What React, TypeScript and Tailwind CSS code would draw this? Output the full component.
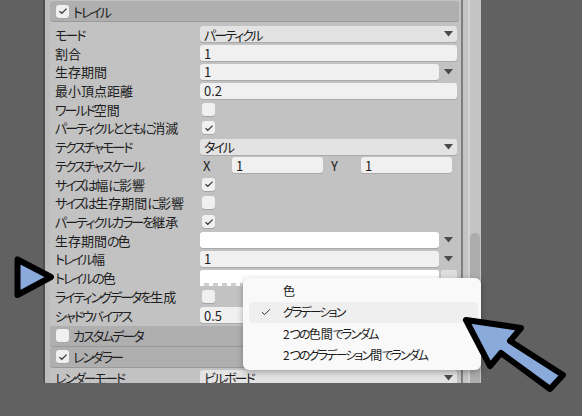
import React from "react";

const FONT = "font-['Noto_Sans_CJK_JP','Noto_Sans',sans-serif] [font-feature-settings:'palt']";

// kana in the reference font are narrower than Noto's, so tighten only the kana runs
function Jp({ text, tight = "label" }: { text: string; tight?: "label" | "menu" }) {
  const parts = text.split(/([\u3040-\u30ff]+)/).filter(Boolean);
  return (
    <>
      {parts.map((p, i) =>
        /[\u3040-\u30ff]/.test(p) ? (
          <span key={i} className={tight === "menu" ? "tracking-[-1.9px]" : "tracking-[-2px]"}>
            {p}
          </span>
        ) : (
          <span key={i}>{p}</span>
        )
      )}
    </>
  );
}

function Check({ on }: { on?: boolean }) {
  return (
    <div className="flex h-[13px] w-[13px] shrink-0 items-center justify-center rounded-[3px] bg-[#f0f0f0] shadow-[0_1px_0_#a4a4a4]">
      {on && (
        <svg width="10" height="8" viewBox="0 0 10 8">
          <path d="M1.5 4.2 L3.8 6.3 L8.6 1.6" fill="none" stroke="#3a3a3a" strokeWidth="1.2" />
        </svg>
      )}
    </div>
  );
}

function Arrow() {
  return (
    <div className="flex w-[18px] shrink-0 items-center justify-center">
      <svg width="9" height="6" viewBox="0 0 9 6">
        <path d="M0 0 H9 L4.5 5.5 Z" fill="#4a4a4a" />
      </svg>
    </div>
  );
}

function Field({ value, className = "" }: { value?: string; className?: string }) {
  return (
    <div
      className={`flex h-[16px] flex-1 items-center rounded-[3px] bg-[#f0f0f0] pl-[4px] text-[13px] leading-none text-[#1e1e1e] shadow-[0_1px_0_#a9a9a9] ${className}`}
    >
      {value}
    </div>
  );
}

function Drop({ value }: { value: string }) {
  return (
    <div className="flex h-[16px] flex-1 items-center justify-between rounded-[3px] bg-[#e3e3e3] pl-[4px] pr-[4px] text-[13px] leading-none text-[#1e1e1e] shadow-[0_1px_0_#a9a9a9]">
      <span>
        <Jp text={value} />
      </span>
      <svg width="9" height="6" viewBox="0 0 9 6">
        <path d="M0 0 H9 L4.5 5.5 Z" fill="#4a4a4a" />
      </svg>
    </div>
  );
}

function Row({ label, children }: { label: string; children?: React.ReactNode }) {
  return (
    <div className="flex h-[18.73px] items-center pl-[5px] pr-[4px]">
      <div className="w-[145px] shrink-0 whitespace-nowrap text-[13px] leading-none text-[#1e1e1e]">
        <Jp text={label} />
      </div>
      <div className="flex flex-1 items-center">{children}</div>
    </div>
  );
}

function Header({ label, on }: { label: string; on?: boolean }) {
  return (
    <div className="mr-[2px] flex h-[20px] items-center gap-[4px] rounded-[3px] bg-[#afafaf] pl-[6px] shadow-[0_1px_0_#999999]">
      <Check on={on} />
      <span className="text-[13px] leading-none text-[#1e1e1e]">
        <Jp text={label} />
      </span>
    </div>
  );
}

const menu = [
  { label: "色" },
  { label: "グラデーション", sel: true },
  { label: "2つの色間でランダム" },
  { label: "2つのグラデーション間でランダム" },
];

export default function App() {
  return (
    <div className={`relative h-[416px] w-[582px] overflow-hidden bg-[#616161] ${FONT}`}>
      <div className="flex">
        <div className="w-[43px] shrink-0" />
        <div className="flex h-[383px] w-[438px] shrink-0 overflow-hidden border-l-2 border-[#4f4f4f] bg-[#c2c2c2]">
          <div className="w-[5px] shrink-0 bg-[#bdbdbd]" />
          <div className="flex w-[411px] shrink-0 flex-col">
            <div className="mr-[2px] h-[3px] rounded-b-[3px] bg-[#a9a9a9]" />
            <div className="mt-[1px]">
              <Header label="トレイル" on />
            </div>
            <div className="mt-[4px] flex flex-col">
              <Row label="モード"><Drop value="パーティクル" /></Row>
              <Row label="割合"><Field value="1" /></Row>
              <Row label="生存期間"><Field value="1" /><Arrow /></Row>
              <Row label="最小頂点距離"><Field value="0.2" /></Row>
              <Row label="ワールド空間"><div className="pl-[2px]"><Check /></div></Row>
              <Row label="パーティクルとともに消滅"><div className="pl-[2px]"><Check on /></div></Row>
              <Row label="テクスチャモード"><Drop value="タイル" /></Row>
              <Row label="テクスチャスケール">
                <span className="w-[32px] pl-[3px] text-[13px] leading-none text-[#1e1e1e]">X</span>
                <Field value="1" className="max-w-[91px]" />
                <span className="w-[38px] pl-[8px] text-[13px] leading-none text-[#1e1e1e]">Y</span>
                <Field value="1" className="mr-[5px] max-w-[91px]" />
              </Row>
              <Row label="サイズは幅に影響"><div className="pl-[2px]"><Check on /></div></Row>
              <Row label="サイズは生存期間に影響"><div className="pl-[2px]"><Check /></div></Row>
              <Row label="パーティクルカラーを継承"><div className="pl-[2px]"><Check on /></div></Row>
              <Row label="生存期間の色"><Field className="bg-[#ffffff]" /><Arrow /></Row>
              <Row label="トレイル幅"><Field value="1" /><Arrow /></Row>
              <Row label="トレイルの色">
                <div className="flex h-[16px] flex-1 flex-col justify-end rounded-[2px] bg-[#ffffff]">
                  <div className="h-[3px] bg-[repeating-linear-gradient(90deg,#ffffff_0_4px,#cfcfcf_4px_9px)]" />
                </div>
                <div className="ml-[2px] h-[16px] w-[16px] rounded-[2px] bg-[#dedede]" />
              </Row>
              <Row label="ライティングデータを生成"><div className="pl-[2px]"><Check /></div></Row>
              <Row label="シャドウバイアス"><Field value="0.5" /></Row>
            </div>
            <div className="mt-[1px]">
              <Header label="カスタムデータ" />
            </div>
            <div className="mt-[1px]">
              <Header label="レンダラー" on />
            </div>
            <div className="mt-[2px]">
              <Row label="レンダーモード"><Drop value="ビルボード" /></Row>
            </div>
          </div>
          <div className="flex w-[20px] shrink-0">
            <div className="w-[2px] bg-[#7e7e7e]" />
            <div className="w-[5px] bg-[#c4c4c4]" />
            <div className="w-[2px] bg-[#d2d2d2]" />
            <div className="flex flex-1 flex-col bg-[#c4c4c4]">
              <div className="h-[233px]" />
              <div className="mr-[1px] flex-1 rounded-t-[5px] bg-[#adadad]" />
            </div>
          </div>
        </div>
      </div>

      {/* dropdown popup */}
      <div className="absolute left-[243px] top-[278px] w-[238px] rounded-[6px] bg-[#f9f9f9] pb-[4px] pt-[2px] shadow-[0_2px_6px_rgba(0,0,0,0.3)]">
        {menu.map((m) => (
          <div
            key={m.label}
            className={`mx-[6px] mr-[3px] flex h-[21.5px] items-center rounded-[4px] text-[12px] leading-none text-[#1b1b1b] ${m.sel ? "bg-[#efefef]" : ""}`}
          >
            <div className="flex w-[34px] shrink-0 items-center justify-center">
              {m.sel && (
                <svg width="10" height="8" viewBox="0 0 10 8">
                  <path d="M1 4.2 L3.6 6.6 L9 1.2" fill="none" stroke="#333" strokeWidth="1" />
                </svg>
              )}
            </div>
            <span>
              <Jp text={m.label} tight="menu" />
            </span>
          </div>
        ))}
      </div>

      {/* annotation arrows */}
      <svg className="pointer-events-none absolute left-0 top-0" width="582" height="416" viewBox="0 0 582 416">
        <polygon
          points="17.5,259.5 17.5,295 51,277"
          fill="#89aadb"
          stroke="#000"
          strokeWidth="6"
          strokeLinejoin="round"
        />
        <polygon
          points="466,320 521,328 510,341 563,375 550,389 501,353 490,366"
          fill="#89aadb"
          stroke="#000"
          strokeWidth="6"
          strokeLinejoin="round"
        />
      </svg>
    </div>
  );
}
